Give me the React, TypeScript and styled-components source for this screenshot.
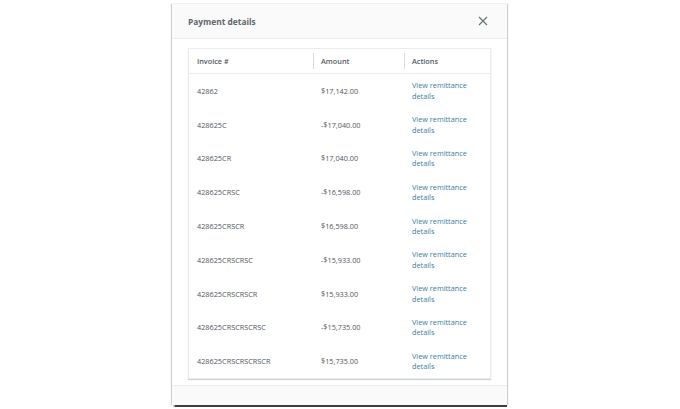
import React from "react";
import styled, { createGlobalStyle } from "styled-components";

interface Payment {
	invoice: string;
	amount: string;
}

const payments: Payment[] = [
	{ invoice: "42862", amount: "$17,142.00" },
	{ invoice: "428625C", amount: "-$17,040.00" },
	{ invoice: "428625CR", amount: "$17,040.00" },
	{ invoice: "428625CRSC", amount: "-$16,598.00" },
	{ invoice: "428625CRSCR", amount: "$16,598.00" },
	{ invoice: "428625CRSCRSC", amount: "-$15,933.00" },
	{ invoice: "428625CRSCRSCR", amount: "$15,933.00" },
	{ invoice: "428625CRSCRSCRSC", amount: "-$15,735.00" },
	{ invoice: "428625CRSCRSCRSCR", amount: "$15,735.00" },
];

const GlobalStyle = createGlobalStyle`
	html, body {
		margin: 0;
		padding: 0;
		background: #fff;
		font-family: "Open Sans", "Liberation Sans", sans-serif;
		color: #545b64;
	}
`;

const Page = styled.div`
	display: flex;
	justify-content: center;
	padding-top: 4px;
	height: 409px;
	box-sizing: border-box;
`;

const Modal = styled.div`
	width: 335px;
	margin-right: 1px;
	height: 401px;
	display: flex;
	flex-direction: column;
	background: #fff;
	box-shadow: 0 2px 1px -0.5px rgba(0, 0, 0, 0.75), 1px 0 1px rgba(0, 28, 36, 0.2),
		-1px 0 1px rgba(0, 28, 36, 0.2);
`;

const Header = styled.div`
	height: 34px;
	display: flex;
	align-items: center;
	justify-content: space-between;
	padding: 0 19px 0 16px;
	background: #fafafa;
	border-bottom: 1px solid #eaeded;
	flex-shrink: 0;
`;

const Title = styled.div`
	font-size: 8.4px;
	font-weight: 700;
	color: #5f666d;
`;

const CloseButton = styled.button`
	border: none;
	background: none;
	padding: 0;
	display: flex;
	color: #687078;
	cursor: pointer;
`;

const Body = styled.div`
	flex: 1;
	padding: 9px 16px 0;
`;

const TableBox = styled.div`
	border: 1px solid #eaeded;
	box-shadow: 0 1px 1px rgba(0, 28, 36, 0.2);
	background: #fff;
`;

const Row = styled.div<{ head?: boolean }>`
	display: grid;
	grid-template-columns: 124px 91px 1fr;
	height: ${({ head }) => (head ? "24px" : "33.8px")};
	border-bottom: ${({ head }) => (head ? "1px solid #eaeded" : "none")};
	align-items: center;
`;

const HeadCell = styled.div<{ divider?: boolean }>`
	font-size: 7.3px;
	font-weight: 600;
	color: #545b64;
	padding-left: 8px;
	position: relative;
	&::before {
		content: "";
		display: ${({ divider }) => (divider ? "block" : "none")};
		position: absolute;
		left: 0;
		top: -3px;
		bottom: -3px;
		border-left: 1px solid #d5dbdb;
	}
`;

const Cell = styled.div`
	font-size: 7.3px;
	color: #4f565e;
	padding-left: 8px;
`;

const Link = styled.a`
	font-size: 7.3px;
	line-height: 10.5px;
	color: #3a7c9f;
	text-decoration: none;
	padding-left: 8px;
	display: block;
	width: 60px;
`;

const Footer = styled.div`
	height: 19px;
	background: #fafafa;
	border-top: 1px solid #eaeded;
	flex-shrink: 0;
`;

const App: React.FC = () => {
	return (
		<>
			<GlobalStyle />
			<Page>
				<Modal>
					<Header>
						<Title>Payment details</Title>
						<CloseButton aria-label="Close">
							<svg width="10" height="10" viewBox="0 0 10 10">
								<path
									d="M1 1L9 9M9 1L1 9"
									stroke="currentColor"
									strokeWidth="1.2"
									fill="none"
								/>
							</svg>
						</CloseButton>
					</Header>
					<Body>
						<TableBox>
							<Row head>
								<HeadCell>Invoice #</HeadCell>
								<HeadCell divider>Amount</HeadCell>
								<HeadCell divider>Actions</HeadCell>
							</Row>
							{payments.map((p) => (
								<Row key={p.invoice}>
									<Cell>{p.invoice}</Cell>
									<Cell>{p.amount}</Cell>
									<Link href="#">View remittance details</Link>
								</Row>
							))}
						</TableBox>
					</Body>
					<Footer />
				</Modal>
			</Page>
		</>
	);
};

export default App;
